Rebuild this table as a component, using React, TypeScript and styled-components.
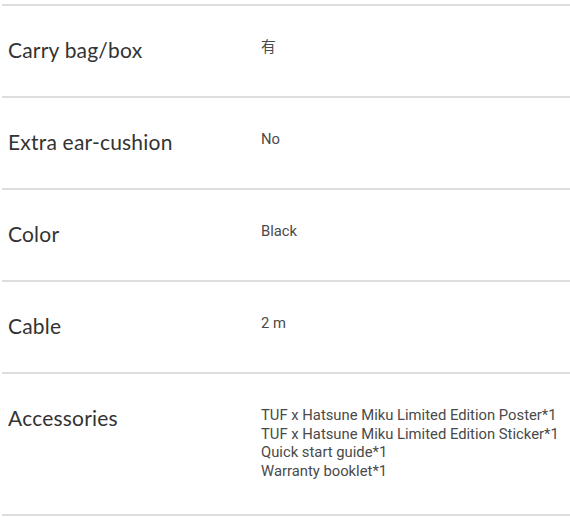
import React from "react";
import styled, { createGlobalStyle } from "styled-components";

const Global = createGlobalStyle`
  html, body { margin: 0; padding: 0; background: #fff; }
`;

const Table = styled.div`
  padding: 4px 0 0 2px;
`;

const Row = styled.div<{ $last?: boolean }>`
  display: grid;
  grid-template-columns: 253px 1fr;
  border-top: 2px solid #dedede;
  border-bottom: ${(p) => (p.$last ? "2px solid #dedede" : "none")};
  padding: 30px 0 0 6px;
  min-height: 92px;
  box-sizing: border-box;
  ${(p) => (p.$last ? "padding-bottom: 34px;" : "")}
`;

const Label = styled.div`
  font-family: Lato, "Open Sans", sans-serif;
  font-size: 21px;
  line-height: 28px;
  color: #333;
  letter-spacing: 0.2px;
`;

const Value = styled.div`
  font-family: Roboto, "Noto Sans CJK SC", sans-serif;
  font-size: 14.8px;
  line-height: 18.5px;
  padding-top: 2px;
  color: #4a4a4a;
`;

const rows: [string, string[]][] = [
  ["Carry bag/box", ["有"]],
  ["Extra ear-cushion", ["No"]],
  ["Color", ["Black"]],
  ["Cable", ["2 m"]],
  [
    "Accessories",
    [
      "TUF x Hatsune Miku Limited Edition Poster*1",
      "TUF x Hatsune Miku Limited Edition Sticker*1",
      "Quick start guide*1",
      "Warranty booklet*1",
    ],
  ],
];

export default function App() {
  return (
    <>
      <Global />
      <Table>
        {rows.map(([label, values], i) => (
          <Row key={label} $last={i === rows.length - 1}>
            <Label>{label}</Label>
            <Value>
              {values.map((v) => (
                <div key={v}>{v}</div>
              ))}
            </Value>
          </Row>
        ))}
      </Table>
    </>
  );
}
